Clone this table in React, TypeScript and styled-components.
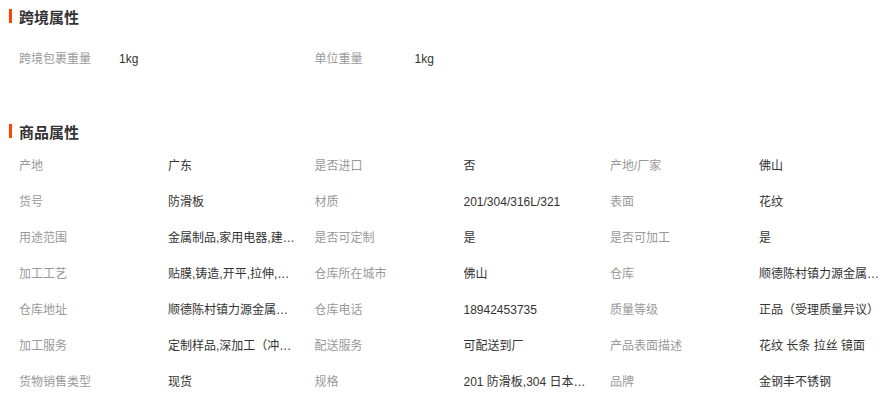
import React from "react";
import styled, { createGlobalStyle } from "styled-components";

const Global = createGlobalStyle`
  html, body { margin: 0; padding: 0; background: #fff; }
  body {
    font-family: "Liberation Sans", Arial, "Noto Sans CJK SC", sans-serif;
    font-size: 12px;
    color: #333;
  }
`;

const Page = styled.div`
  width: 887px;
  height: 406px;
  overflow: hidden;
`;

const Section = styled.section<{ $top: number }>`
  margin-top: ${(p) => p.$top}px;
`;

const Header = styled.h3`
  display: flex;
  align-items: center;
  gap: 7px;
  margin: 0;
  padding-left: 9px;
  height: 24px;
  font-size: 15px;
  font-weight: bold;
  color: #333;
`;

const Bar = styled.span`
  display: block;
  width: 3px;
  height: 14px;
  background: #ff4400;
`;

const List = styled.ul<{ $top: number }>`
  display: grid;
  grid-template-columns: repeat(3, 295.5px);
  list-style: none;
  margin: 0;
  padding: ${(p) => p.$top}px 0 0 19px;
`;

const Item = styled.li<{ $labelWidth: number }>`
  display: flex;
  align-items: center;
  height: 36px;
  line-height: 36px;
  min-width: 0;
  & > span:first-child {
    width: ${(p) => p.$labelWidth}px;
  }
`;

const Label = styled.span`
  flex: none;
  color: #999;
  white-space: nowrap;
`;

const Value = styled.span`
  max-width: 127px;
  color: #333;
  white-space: nowrap;
  overflow: hidden;
  text-overflow: ellipsis;
`;

const crossBorder: [string, string][] = [
  ["跨境包裹重量", "1kg"],
  ["单位重量", "1kg"],
];

const attrs: [string, string][] = [
  ["产地", "广东"],
  ["是否进口", "否"],
  ["产地/厂家", "佛山"],
  ["货号", "防滑板"],
  ["材质", "201/304/316L/321"],
  ["表面", "花纹"],
  ["用途范围", "金属制品,家用电器,建筑装饰"],
  ["是否可定制", "是"],
  ["是否可加工", "是"],
  ["加工工艺", "贴膜,铸造,开平,拉伸,折弯"],
  ["仓库所在城市", "佛山"],
  ["仓库", "顺德陈村镇力源金属物流园"],
  ["仓库地址", "顺德陈村镇力源金属物流园"],
  ["仓库电话", "18942453735"],
  ["质量等级", "正品（受理质量异议）"],
  ["加工服务", "定制样品,深加工（冲压、折弯）"],
  ["配送服务", "可配送到厂"],
  ["产品表面描述", "花纹 长条 拉丝 镜面"],
  ["货物销售类型", "现货"],
  ["规格", "201 防滑板,304 日本进口防滑板"],
  ["品牌", "金钢丰不锈钢"],
];

export default function App() {
  return (
    <Page>
      <Global />
      <Section $top={4}>
        <Header>
          <Bar />
          跨境属性
        </Header>
        <List $top={13}>
          {crossBorder.map(([k, v]) => (
            <Item key={k} $labelWidth={100}>
              <Label>{k}</Label>
              <Value title={v}>{v}</Value>
            </Item>
          ))}
        </List>
      </Section>
      <Section $top={42}>
        <Header>
          <Bar />
          商品属性
        </Header>
        <List $top={5}>
          {attrs.map(([k, v]) => (
            <Item key={k} $labelWidth={149}>
              <Label>{k}</Label>
              <Value title={v}>{v}</Value>
            </Item>
          ))}
        </List>
      </Section>
    </Page>
  );
}
